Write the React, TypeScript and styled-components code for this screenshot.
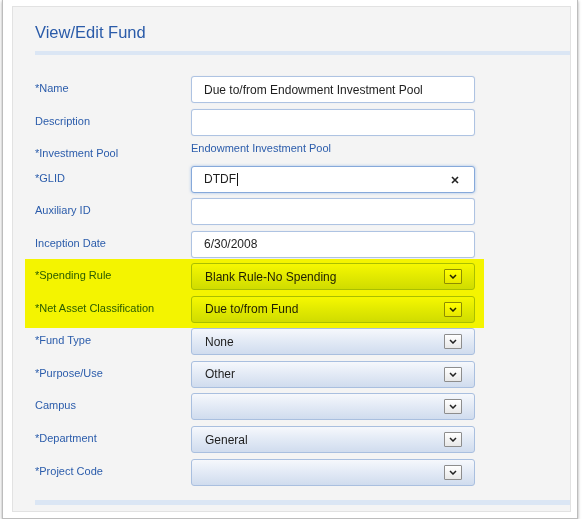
import React from "react";
import styled, { createGlobalStyle } from "styled-components";

const GlobalStyle = createGlobalStyle`
  html, body {
    margin: 0;
    padding: 0;
    background: #ffffff;
    font-family: "Liberation Sans", Arial, sans-serif;
  }
  * { box-sizing: border-box; }
`;

const Window = styled.div`
  margin-left: 2px;
  width: 576px;
  background: #ffffff;
  border: 1px solid #bdbdbd;
  border-top: none;
  box-shadow: 0 1px 3px rgba(0, 0, 0, 0.35);
  padding: 6px 6px 6px 9px;
`;

const Panel = styled.div`
  background: #f4f4f4;
  border: 1px solid #e2e2e2;
  padding-bottom: 6px;
`;

const Title = styled.h1`
  margin: 0;
  padding: 16px 0 0 22px;
  font-size: 16.5px;
  line-height: 19px;
  font-weight: normal;
  color: #2a5ba9;
`;

const Rule = styled.div<{ $h: number; $top: number }>`
  margin: ${(p) => p.$top}px 0 0 22px;
  height: ${(p) => p.$h}px;
  background: #dbe6f4;
`;

const Form = styled.div`
  margin: 21px 0 0 22px;
  width: 440px;
  display: flex;
  flex-direction: column;
  gap: 5.55px;
`;

const Highlight = styled.div`
  position: relative;
  display: flex;
  flex-direction: column;
  gap: 5.55px;
  &::after {
    content: "";
    position: absolute;
    top: -4px;
    bottom: -5px;
    left: -10px;
    right: -9px;
    background: #ffff00;
    mix-blend-mode: multiply;
    pointer-events: none;
  }
`;

const Row = styled.div<{ $compact?: boolean }>`
  display: grid;
  grid-template-columns: 156px 284px;
  height: ${(p) => (p.$compact ? 19 : 27)}px;
`;

const Label = styled.div`
  padding-top: 6px;
  font-size: 11px;
  line-height: 13px;
  color: #2b5cab;
`;

const StaticValue = styled.div`
  padding-top: 1px;
  font-size: 11px;
  line-height: 13px;
  color: #2b5cab;
`;

const TextBox = styled.div<{ $focused?: boolean }>`
  position: relative;
  height: 27px;
  display: flex;
  align-items: center;
  padding-left: 12px;
  background: #ffffff;
  border: 1px solid ${(p) => (p.$focused ? "#86a9da" : "#aec3e2")};
  border-radius: 3px;
  box-shadow: ${(p) =>
    p.$focused ? "0 0 3px rgba(90, 145, 220, 0.55)" : "0 0 1px rgba(120, 150, 200, 0.3)"};
  font-size: 12px;
  color: #1e1e1e;
`;

const Caret = styled.span`
  display: inline-block;
  width: 1px;
  height: 13px;
  margin-left: 1px;
  background: #111;
`;

const ClearButton = styled.span`
  position: absolute;
  right: 15px;
  top: 9px;
  width: 8px;
  height: 8px;
  display: flex;
`;

const SelectBox = styled.div`
  height: 27px;
  display: flex;
  align-items: center;
  justify-content: space-between;
  padding: 0 12px 0 13px;
  border: 1px solid #a9bfdf;
  border-radius: 3px;
  background: linear-gradient(#f6f8fc 0%, #e4ebf6 45%, #d0dcee 100%);
  font-size: 12px;
  color: #1e1e1e;
`;

const DropButton = styled.span`
  width: 18px;
  height: 15px;
  display: flex;
  align-items: center;
  justify-content: center;
  border: 1px solid #8d8d8d;
  border-radius: 1px;
  background: linear-gradient(#ffffff, #e8e8e8);
`;

const Chevron = () => (
  <svg width="8" height="5" viewBox="0 0 8 5">
    <path d="M1 1 L4 4 L7 1" fill="none" stroke="#222" strokeWidth="1.5" />
  </svg>
);

const Cross = () => (
  <svg width="8" height="8" viewBox="0 0 8 8">
    <path d="M1 1 L7 7 M7 1 L1 7" stroke="#222" strokeWidth="1.6" />
  </svg>
);

const Select = ({ value }: { value: string }) => (
  <SelectBox>
    <span>{value}</span>
    <DropButton>
      <Chevron />
    </DropButton>
  </SelectBox>
);

export default function App() {
  return (
    <>
      <GlobalStyle />
      <Window>
        <Panel>
          <Title>View/Edit Fund</Title>
          <Rule $h={4} $top={9} />
          <Form>
            <Row>
              <Label>*Name</Label>
              <TextBox>Due to/from Endowment Investment Pool</TextBox>
            </Row>
            <Row>
              <Label>Description</Label>
              <TextBox />
            </Row>
            <Row $compact>
              <Label>*Investment Pool</Label>
              <StaticValue>Endowment Investment Pool</StaticValue>
            </Row>
            <Row>
              <Label>*GLID</Label>
              <TextBox $focused>
                DTDF
                <Caret />
                <ClearButton>
                  <Cross />
                </ClearButton>
              </TextBox>
            </Row>
            <Row>
              <Label>Auxiliary ID</Label>
              <TextBox />
            </Row>
            <Row>
              <Label>Inception Date</Label>
              <TextBox>6/30/2008</TextBox>
            </Row>
            <Highlight>
              <Row>
                <Label>*Spending Rule</Label>
                <Select value="Blank Rule-No Spending" />
              </Row>
              <Row>
                <Label>*Net Asset Classification</Label>
                <Select value="Due to/from Fund" />
              </Row>
            </Highlight>
            <Row>
              <Label>*Fund Type</Label>
              <Select value="None" />
            </Row>
            <Row>
              <Label>*Purpose/Use</Label>
              <Select value="Other" />
            </Row>
            <Row>
              <Label>Campus</Label>
              <Select value="" />
            </Row>
            <Row>
              <Label>*Department</Label>
              <Select value="General" />
            </Row>
            <Row>
              <Label>*Project Code</Label>
              <Select value="" />
            </Row>
          </Form>
          <Rule $h={5} $top={14} />
        </Panel>
      </Window>
    </>
  );
}
